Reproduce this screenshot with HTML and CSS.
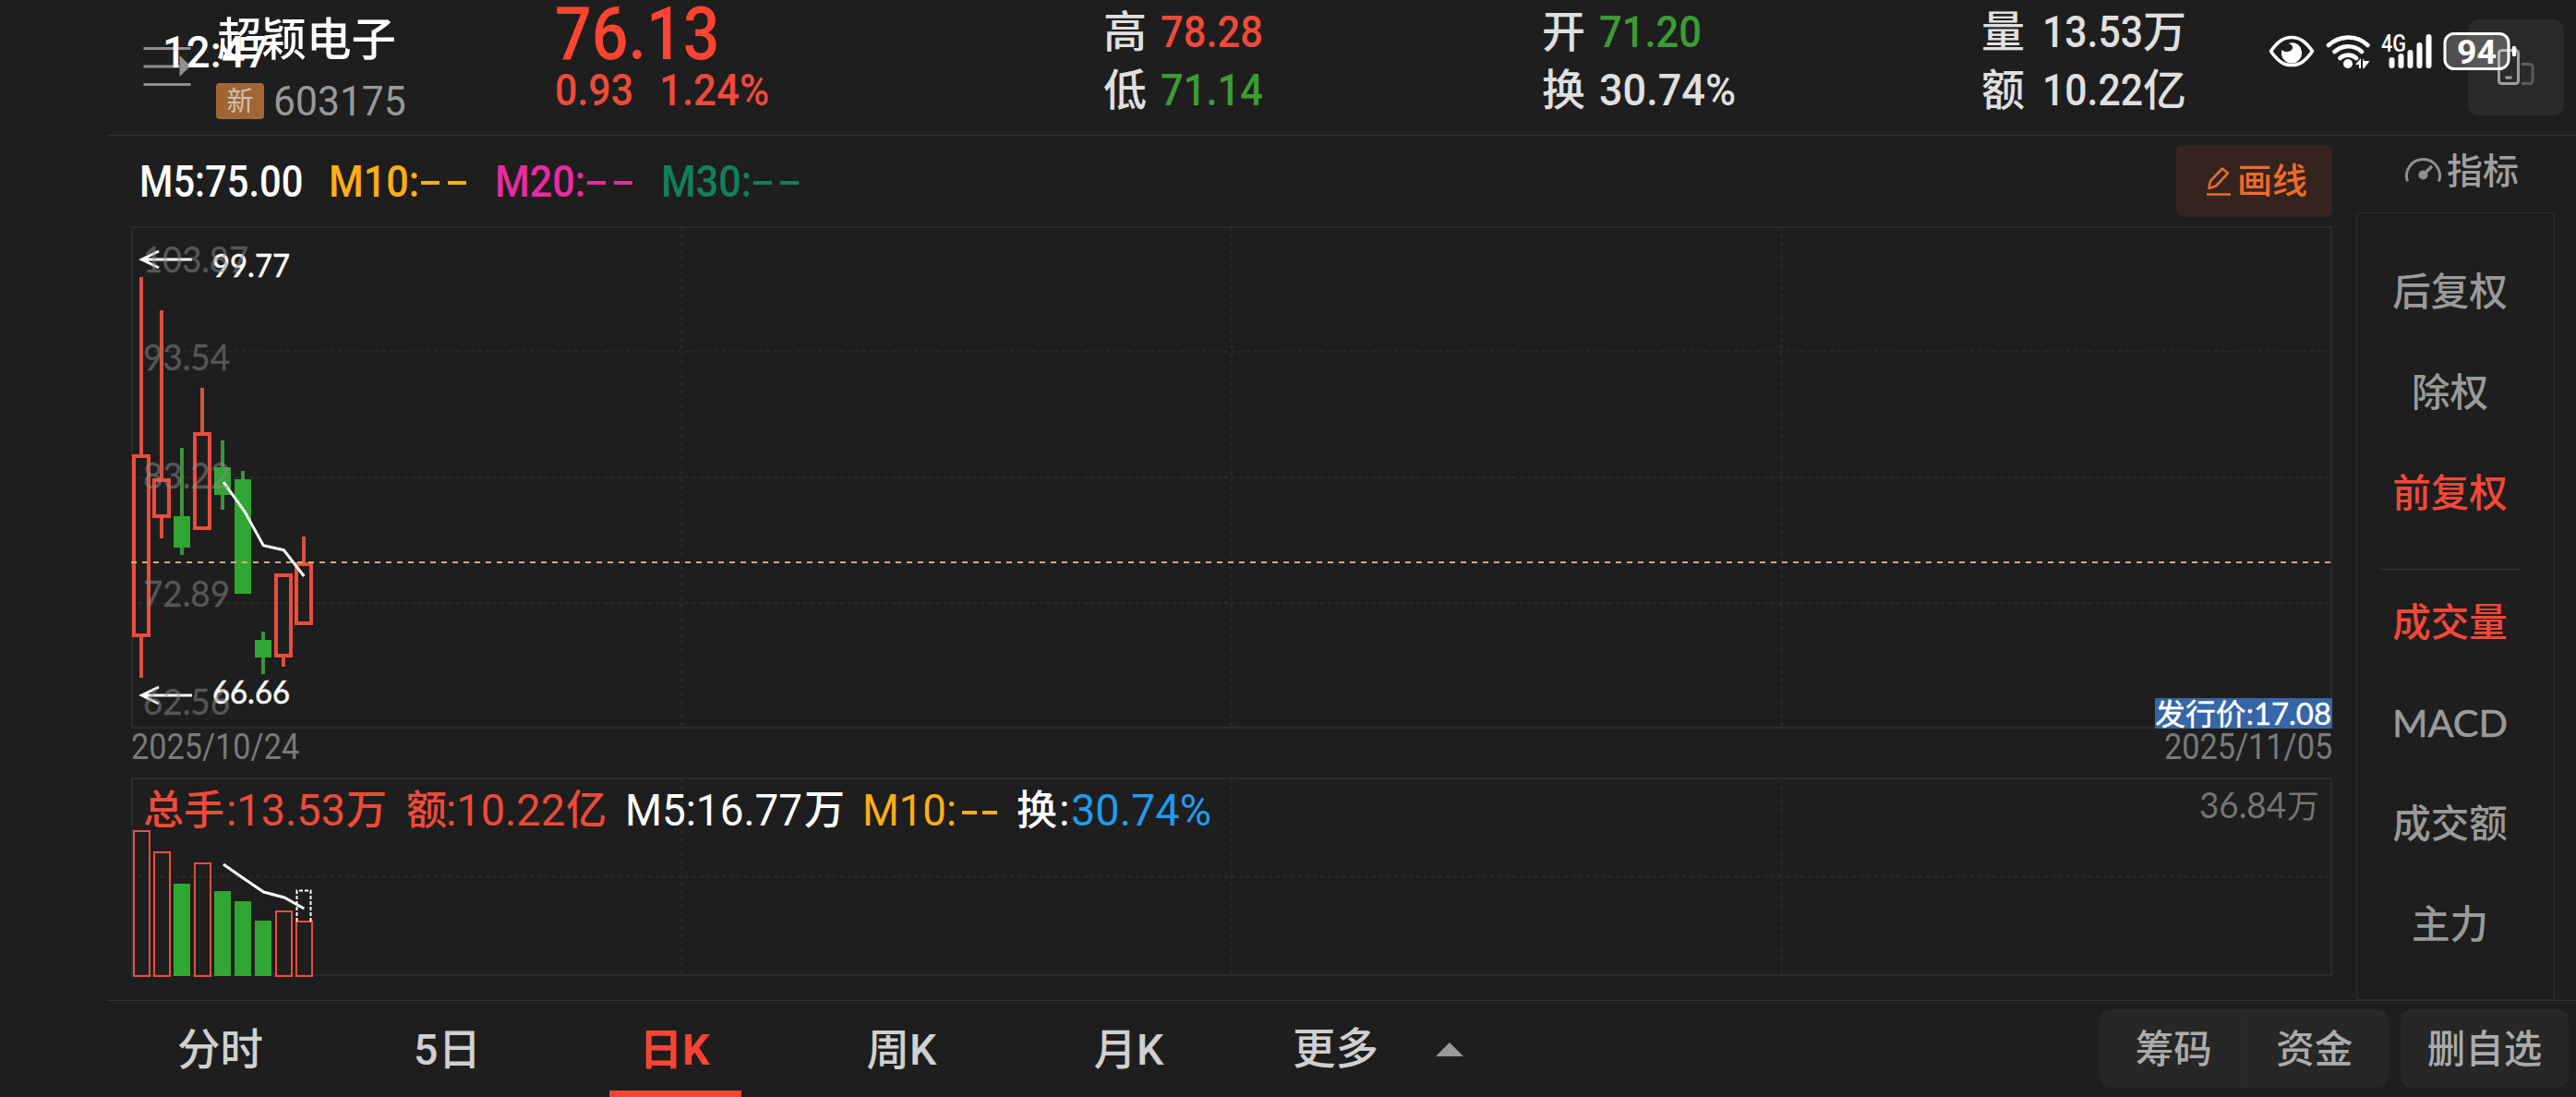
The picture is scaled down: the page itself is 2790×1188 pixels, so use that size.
FILE: index.html
```html
<!doctype html>
<html lang="zh-CN">

<head>
    <meta charset="utf-8">
    <title>超颖电子 603175</title>
    <link rel="stylesheet" href="styles.css">
</head>

<body>
    <div class="status-clock"><span class="fit" data-w="115">12:47</span></div>
    <svg class="status-icons" viewBox="2450 30 290 50">
        <!-- eye -->
        <path d="M2459.500 55.500C2467 45 2473 40.500 2482 40.500S2497 45 2504.500 55.500C2497 66 2491 70.500 2482 70.500S2467 66 2459.500 55.500Z" fill="none" stroke="#fff" stroke-width="3.600" stroke-linejoin="round" />
        <path d="M2478.500 47C2487 44 2493 50 2493 57.500A11 11 0 0 1 2471 57.500C2471 56.500 2471 55 2471.500 54C2475 57.500 2482 56.500 2483 52C2483.500 49.500 2481 47.500 2478.500 47Z" fill="#fff" />
        <!-- wifi -->
        <g fill="none" stroke="#fff" stroke-width="4.600" stroke-linecap="round">
            <path d="M2522 49a31 31 0 0 1 42.500 0" />
            <path d="M2528.500 56a22 22 0 0 1 29.500 0" />
            <path d="M2534.500 63a13 13 0 0 1 17.500 0" />
        </g>
        <circle cx="2543" cy="69" r="5" fill="#fff" />
        <path d="M2551 70l6-7v11h-2v-4zM2559 63l1.500 3h6l-6 8h-1.500z" fill="#fff" />
        <!-- signal -->
        <text class="net" x="2579" y="56" textLength="27" lengthAdjust="spacingAndGlyphs">4G</text>
        <g stroke="#fff" stroke-width="6" stroke-linecap="round">
            <path d="M2590.500 65v6M2600.500 61v10M2610.500 57v14M2620.500 49v22M2630.500 40v31" />
        </g>
        <!-- battery -->
        <rect x="2648" y="36.500" width="69" height="38" rx="10" fill="#fff" fill-opacity=".22" stroke="#fff" stroke-width="3" />
        <path d="M2723 52v7" stroke="#fff" stroke-width="4.500" stroke-linecap="round" />
        <text class="battery" x="2661" y="68.500" textLength="43" lengthAdjust="spacingAndGlyphs">94</text>
    </svg>

    <header class="header">
        <svg class="menu" viewBox="155 48 52 46">
            <path d="M155.500 52.500h51M155.500 72h39M155.500 91.500h51" stroke="#8f8f8f" stroke-width="3" />
            <path d="M194.500 60l12 11.500-12 11.500z" fill="#8f8f8f" />
        </svg>
        <div class="stock">
            <div class="stock-name">超颖电子</div>
            <div class="stock-code"><span class="badge">新</span><span class="fit" data-w="144">603175</span></div>
        </div>
        <div class="price">
            <div class="price-now"><span class="fit" data-w="179">76.13</span></div>
            <div class="price-diff"><span class="fit" data-w="85">0.93</span><span class="fit" data-w="119">1.24%</span></div>
        </div>
        <div class="stat">
            <div class="row"><b>高</b><span class="fit red" data-w="111">78.28</span></div>
            <div class="row"><b>低</b><span class="fit green" data-w="111">71.14</span></div>
        </div>
        <div class="stat">
            <div class="row"><b>开</b><span class="fit green" data-w="111">71.20</span></div>
            <div class="row"><b>换</b><span class="fit" data-w="148">30.74%</span></div>
        </div>
        <div class="stat">
            <div class="row wide"><b>量</b><span class="fit" data-w="109">13.53</span><b>万</b></div>
            <div class="row wide"><b>额</b><span class="fit" data-w="109">10.22</span><b>亿</b></div>
        </div>
        <div class="rotate">
            <svg viewBox="2704 51 42 43">
                <rect x="2706.500" y="54.500" width="21" height="36" rx="3" fill="none" stroke="#a0a0a0" stroke-width="3" />
                <path d="M2713.500 84h7" stroke="#a0a0a0" stroke-width="3" />
                <path d="M2731 69.500h9a3 3 0 0 1 3 3v15a3 3 0 0 1-3 3h-9" fill="none" stroke="#5c5c5c" stroke-width="3" />
            </svg>
        </div>
    </header>

    <main class="main">
        <div class="charts">
            <div class="legend">
                <span class="fit" data-w="177">M5:75.00</span>
                <span class="ma m10"><span class="fit" data-w="98">M10:</span><i></i><i></i></span>
                <span class="ma m20"><span class="fit" data-w="98">M20:</span><i></i><i></i></span>
                <span class="ma m30"><span class="fit" data-w="98">M30:</span><i></i><i></i></span>
                <div class="draw">
                    <svg viewBox="2388 178 30 34">
                        <path d="M2392.500 203l1.500-8 13-13.500 6 5-13 14z" fill="none" stroke="#e06a38" stroke-width="2.600" stroke-linejoin="round" />
                        <path d="M2390 209.500h26" stroke="#e06a38" stroke-width="2.600" />
                    </svg>
                    画线
                </div>
            </div>

            <svg class="kline" viewBox="142 245 2384 544">
                <g class="frame">
                    <rect x="143" y="246" width="2382" height="542" />
                    <path class="dash" d="M142 381H2525M142 517H2525M142 653H2525M738.500 246V788M1334 246V788M1929.500 246V788" />
                </g>
                <g id="candles"></g>
                <path class="last" d="M142 609H2525" />
                <path class="line" d="M242 522L265 554L285.300 590.700L307.300 595.700L329.300 624" />
                <path class="line" d="M208 281H153M172 272L153.500 281L172 290M208 753H153M172 744L153.500 753L172 762" />
                <g class="mark">
                    <text x="230" y="300" textLength="84" lengthAdjust="spacingAndGlyphs">99.77</text>
                    <text x="230" y="762" textLength="84" lengthAdjust="spacingAndGlyphs">66.66</text>
                </g>
                <g class="axis">
                    <text x="155" y="295" textLength="114" lengthAdjust="spacingAndGlyphs">103.87</text>
                    <text x="155" y="401" textLength="94" lengthAdjust="spacingAndGlyphs">93.54</text>
                    <text x="155" y="529" textLength="94" lengthAdjust="spacingAndGlyphs">83.22</text>
                    <text x="155" y="657" textLength="94" lengthAdjust="spacingAndGlyphs">72.89</text>
                    <text x="155" y="774" textLength="94" lengthAdjust="spacingAndGlyphs">62.56</text>
                </g>
                <rect x="2334" y="756" width="192" height="33" fill="#3666a6" />
                <text class="issue" x="2334" y="784.500" textLength="191" lengthAdjust="spacingAndGlyphs">发行价:17.08</text>
            </svg>

            <div class="dates">
                <span class="fit" data-w="182">2025/10/24</span>
                <span class="fit" data-w="182">2025/11/05</span>
            </div>

            <svg class="volume" viewBox="142 842 2384 217">
                <g class="frame">
                    <rect x="143" y="843" width="2382" height="213" />
                    <path class="dash" d="M142 949.500H2525M738.500 843V1056M1334 843V1056M1929.500 843V1056" />
                </g>
                <g id="bars"></g>
                <path d="M321.500 998V964.500H336.500V998" fill="none" stroke="#fff" stroke-width="2" stroke-dasharray="4 2" />
                <path class="line" d="M242 936L263 950.700L285.600 966L308 972L329.400 984" />
                <g class="vol-legend">
                    <g fill="#f04a3a">
                        <text class="cn" x="155" y="893">总手</text>
                        <text x="245" y="894" textLength="129" lengthAdjust="spacingAndGlyphs">:13.53</text>
                        <text class="cn" x="375" y="893">万</text>
                        <text class="cn" x="440" y="893">额</text>
                        <text x="483" y="894" textLength="129" lengthAdjust="spacingAndGlyphs">:10.22</text>
                        <text class="cn" x="613" y="893">亿</text>
                    </g>
                    <g fill="#fff">
                        <text x="677" y="894" textLength="192" lengthAdjust="spacingAndGlyphs">M5:16.77</text>
                        <text class="cn" x="871" y="893">万</text>
                    </g>
                    <text x="934" y="894" textLength="102" lengthAdjust="spacingAndGlyphs" fill="#fcae17">M10:</text>
                    <path d="M1042 880h16M1064 880h16" stroke="#fcae17" stroke-width="4" />
                    <text class="cn" x="1101" y="893" fill="#fff">换</text>
                    <text x="1147" y="894" fill="#fff">:</text>
                    <text x="1160" y="894" textLength="152" lengthAdjust="spacingAndGlyphs" fill="#1e9df2">30.74%</text>
                </g>
                <text class="vol-max" x="2382" y="886" textLength="94" lengthAdjust="spacingAndGlyphs">36.84</text>
                <text class="vol-max cjk" x="2477" y="886">万</text>
            </svg>
        </div>

        <aside class="side">
            <div class="side-title">
                <svg viewBox="2604 166 42 34">
                    <path d="M2607.500 195.500A18 18 0 1 1 2641.500 195.500" fill="none" stroke="#8f8f8f" stroke-width="3" />
                    <circle cx="2624.500" cy="188.500" r="5" fill="#8f8f8f" />
                    <path d="M2624.500 188.500l9.500-9.500" stroke="#8f8f8f" stroke-width="3.500" />
                </svg>
                指标
            </div>
            <div class="side-list">
                <div class="item">后复权</div>
                <div class="item">除权</div>
                <div class="item on">前复权</div>
                <hr>
                <div class="item on">成交量</div>
                <div class="item macd">MACD</div>
                <div class="item">成交额</div>
                <div class="item">主力</div>
            </div>
        </aside>
    </main>

    <footer class="footer">
        <div class="tab">分时</div>
        <div class="tab">5日</div>
        <div class="tab active">日K</div>
        <div class="tab">周K</div>
        <div class="tab">月K</div>
        <div class="tab more">更多<i class="arrow"></i></div>
        <div class="group">
            <span>筹码</span>
            <span>资金</span>
        </div>
        <div class="group single"><span>删自选</span></div>
    </footer>

    <script src="main.js"></script>
</body>

</html>
```
FILE: styles.css
```css
* {
    box-sizing: border-box;
    margin: 0;
    padding: 0;
}

body {
    width: 2790px;
    height: 1188px;
    display: flex;
    flex-direction: column;
    position: relative;
    overflow: hidden;
    background: #1e1e1e;
    color: #e0e0e0;
    font-family: Roboto, "Noto Sans CJK SC", sans-serif;
}

svg {
    display: block;
    overflow: visible;
}

.fit {
    display: inline-block;
    transform-origin: 0 50%;
    white-space: nowrap;
}

.red {
    color: #f04a3a;
}

.green {
    color: #3c9c34;
}

/* system status bar, floats over the header */
.status-clock {
    position: absolute;
    left: 176px;
    top: 32px;
    z-index: 2;
    font-size: 49px;
    line-height: 50px;
    font-weight: 500;
    color: #fff;
}

.status-icons {
    position: absolute;
    left: 2450px;
    top: 30px;
    z-index: 2;
    width: 290px;
    height: 50px;
}

.net {
    font-size: 25px;
    font-weight: 500;
    fill: #fff;
}

.battery {
    font-size: 36px;
    font-weight: 700;
    fill: #fff;
}

/* header */
.header {
    height: 147px;
    margin-left: 116px;
    border-bottom: 1px solid #323232;
    display: grid;
    grid-template-columns: 118px 367px 594px 475px 476px 527px auto;
}

.menu {
    width: 52px;
    height: 46px;
    margin: 48px 0 0 39px;
}

.stock-name {
    padding: 14px 0 0 1px;
    font-size: 48.5px;
    line-height: 60px;
    font-weight: 500;
    color: #fff;
}

.stock-code {
    display: flex;
    align-items: center;
    gap: 10px;
    margin-top: 16px;
    height: 39px;
    font-size: 45px;
    line-height: 39px;
    color: #999;
}

.badge {
    width: 52px;
    height: 39px;
    border-radius: 4px;
    background: #a06535;
    color: #cfc0b0;
    font-size: 29px;
    line-height: 40px;
    text-align: center;
}

.price {
    color: #fd4433;
    font-weight: 500;
}

.price-now {
    height: 66px;
    font-size: 79px;
    line-height: 75px;
}

.price-diff {
    display: flex;
    gap: 28px;
    font-size: 49px;
    line-height: 63px;
    color: #f04a3a;
}

.stat {
    padding-top: 3px;
    font-size: 49px;
    font-weight: 500;
}

.row {
    display: flex;
    align-items: baseline;
    height: 63px;
    line-height: 63px;
}

.row b {
    width: 62px;
    font-size: 47px;
    font-weight: 500;
}

.wide b {
    width: 66px;
}

.rotate {
    width: 104px;
    height: 104px;
    margin-top: 21px;
    padding: 30px 0 0 31px;
    border-radius: 12px;
    background: #2a2a2a;
}

.rotate svg {
    width: 42px;
    height: 43px;
}

/* charts */
.main {
    display: flex;
    height: 936px;
}

.charts {
    width: 2384px;
    margin-left: 142px;
}

.legend {
    display: flex;
    height: 98px;
    padding: 10px 0 0 9px;
    font-size: 48px;
    line-height: 79px;
    font-weight: 500;
    color: #fff;
}

.ma {
    display: flex;
    align-items: center;
    width: 180px;
    height: 79px;
}

.ma:nth-child(2) {
    margin-left: 28px;
}

.ma i {
    width: 20px;
    height: 4px;
    margin: 2px 8px 0 1px;
    background: currentColor;
}

.m10 {
    color: #fcae17;
}

.m20 {
    color: #e92ba0;
}

.m30 {
    color: #128059;
}

.draw {
    display: flex;
    align-items: center;
    width: 169px;
    height: 78px;
    margin-left: auto;
    padding-left: 31px;
    gap: 5px;
    border-radius: 7px;
    background: #35241e;
    color: #f26a2b;
    font-size: 38px;
}

.draw svg {
    width: 30px;
    height: 34px;
}

.kline {
    width: 2384px;
    height: 544px;
}

.volume {
    width: 2384px;
    height: 217px;
}

.frame {
    fill: none;
    stroke: #2a2a2a;
    stroke-width: 2;
}

.dash {
    stroke-dasharray: 4 4;
}

.last {
    stroke: #d3ad75;
    stroke-width: 2;
    stroke-dasharray: 6 6;
}

.line {
    fill: none;
    stroke: #fff;
    stroke-width: 3;
}

.up {
    fill: none;
    stroke: #ea4d3d;
}

.down {
    fill: #31a633;
}

.mark {
    font: 400 34px Lato, sans-serif;
    fill: #fff;
    stroke: #fff;
    stroke-width: .5;
}

.axis {
    font: 38px Lato, sans-serif;
    fill: rgba(140, 140, 140, .5);
    stroke: rgba(140, 140, 140, .2);
    stroke-width: .8;
}

.issue {
    font: 400 32px Lato, "Noto Sans CJK SC", sans-serif;
    fill: #fff;
    stroke: #fff;
    stroke-width: .4;
}

.dates {
    display: flex;
    justify-content: space-between;
    height: 53px;
    padding-top: 1px;
    font-size: 38px;
    line-height: 38px;
    color: #7a7a7a;
}

.vol-legend {
    font-size: 47.5px;
    font-weight: 450;
}

.cn {
    font-size: 44px;
    font-weight: 500;
}

.vol-max {
    font: 38px Lato, sans-serif;
    fill: #757575;
}

.cjk {
    font: 35px "Noto Sans CJK SC", sans-serif;
}

/* right side menu */
.side {
    width: 215px;
    margin-left: 26px;
    font-size: 41.5px;
    font-family: Lato, "Noto Sans CJK SC", sans-serif;
    font-weight: 500;
    color: #9a9a9a;
    text-align: center;
}

.side-title {
    display: flex;
    align-items: center;
    gap: 4px;
    height: 83px;
    padding: 0 0 13px 52px;
    font-size: 39px;
    color: #a0a0a0;
}

.side-title svg {
    width: 42px;
    height: 34px;
    margin-top: 3px;
}

.side-list {
    height: 853px;
    padding: 30px 12px 0 0;
    border: 1px solid #2f2f2f;
}

.item {
    height: 109px;
    line-height: 109px;
}

.macd {
    font-weight: 400;
    -webkit-text-stroke: .6px;
}

.on {
    color: #f54838;
}

.side-list hr {
    margin: 28px 23px 2px 24px;
    border: 0;
    border-top: 1px solid #323232;
}

/* bottom tabs */
.footer {
    display: flex;
    height: 105px;
    margin-left: 116px;
    border-top: 1px solid #323232;
    color: #d0d0d0;
    font-size: 46.5px;
    font-weight: 500;
    line-height: 107px;
}

.tab {
    width: 246px;
    padding-right: 1px;
    text-align: center;
}

.active {
    color: #fd4433;
    font-weight: 700;
    background: linear-gradient(#fd4433, #fd4433) center bottom / 143px 7px no-repeat;
}

.more {
    display: flex;
    align-items: center;
    width: 300px;
    padding-left: 54px;
}

.arrow {
    margin-left: 62px;
    border: 15px solid transparent;
    border-top: 0;
    border-bottom-color: #999;
}

.group {
    display: flex;
    width: 313px;
    height: 85px;
    margin: 9px 13px 0 auto;
    padding: 0 4px;
    border-radius: 12px;
    background: #272727;
    color: #ababab;
    font-size: 41.5px;
    line-height: 87px;
}

.group span {
    flex: 1;
    text-align: center;
}

.group span + span {
    box-shadow: -1px 0 #2b2b2b;
}

.single {
    width: 182px;
    margin: 9px 8px 0 0;
}
```
FILE: main.js
```js
var ns = "http://www.w3.org/2000/svg";

function add(parent, name, attrs) {
    var el = document.createElementNS(ns, name);
    for (var key in attrs) {
        el.setAttribute(key, attrs[key]);
    }
    parent.appendChild(el);
}

// [up, high, body top, body bottom, low, volume top]
var days = [
    [1, 300, 492, 690, 734, 899],
    [1, 336, 518, 561, 583, 922],
    [0, 485, 559, 593, 601, 957],
    [1, 420, 468, 574, 574, 934],
    [0, 477, 506, 536, 552, 965],
    [0, 510, 519, 643, 643, 976],
    [0, 684, 693, 712, 730, 997],
    [1, 621, 621, 712, 722, 986],
    [1, 581, 609, 677, 677, 997]
];

var candles = document.getElementById("candles");
var bars = document.getElementById("bars");

days.forEach(function (d, i) {
    var x = 153 + i * 22;
    var color = d[0] ? "#dc5140" : "#3c9240";
    add(candles, "path", {
        d: "M" + x + " " + d[1] + "V" + d[2] + "M" + x + " " + d[3] + "V" + d[4],
        stroke: color,
        "stroke-width": 4
    });
    if (d[0]) {
        add(candles, "rect", { class: "up", x: x - 8, y: d[2] + 2, width: 16, height: d[3] - d[2] - 4, "stroke-width": 4 });
        add(bars, "rect", { class: "up", x: x - 8, y: d[5] + 1, width: 17, height: 1057 - d[5] - 1, "stroke-width": 2 });
    } else {
        add(candles, "rect", { class: "down", x: x - 9, y: d[2], width: 18, height: d[3] - d[2] });
        add(bars, "rect", { class: "down", x: x - 9, y: d[5], width: 18, height: 1057 - d[5] });
    }
});

// condense the numbers to their column width
document.querySelectorAll(".fit").forEach(function (el) {
    var w = Number(el.dataset.w);
    var full = el.offsetWidth;
    el.style.transform = "scaleX(" + w / full + ")";
    el.style.marginRight = (w - full) + "px";
});
```
